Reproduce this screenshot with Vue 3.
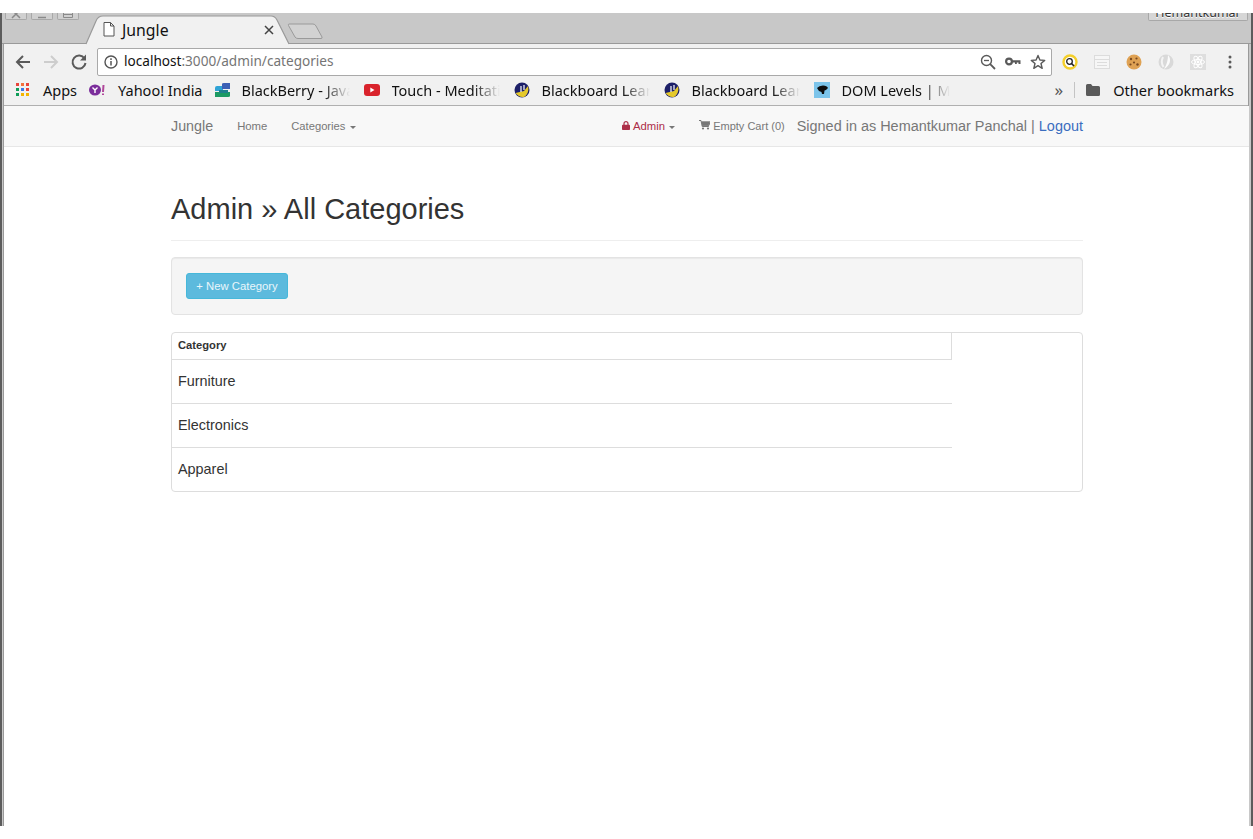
<template>
  <div class="window">
    <div class="tabstrip">
      <div class="wm-buttons">
        <span class="wm-btn">
          <svg width="20" height="7" viewBox="0 0 20 7"><path d="M6 -3 L14 5 M14 -3 L6 5" stroke="#8a8a8a" stroke-width="1.500" /></svg>
        </span>
        <span class="wm-btn">
          <svg width="20" height="7" viewBox="0 0 20 7"><path d="M6 4.500 H14" stroke="#8a8a8a" stroke-width="1.500" /></svg>
        </span>
        <span class="wm-btn">
          <svg width="20" height="7" viewBox="0 0 20 7"><path d="M5.500 -2 V4.500 H14.500 V-2 M5.500 1.500 H14.500" fill="none" stroke="#8a8a8a" /></svg>
        </span>
      </div>
      <div class="tab">
        <svg class="tab-shape" width="206" height="31" viewBox="0 0 206 31">
          <path d="M1 30 L11 7 Q13 2 18 2 L186 2 Q190 2 192 6 L204 30" fill="#f1f1f1" stroke="#9a9a9a" stroke-width="1.2" />
        </svg>
        <svg class="tab-file" width="12" height="15" viewBox="0 0 12 15">
          <path d="M1 .5 H7.5 L11 4 V14 H1 Z M7.5 .5 V4 H11" fill="#fff" stroke="#555" stroke-width="1" />
        </svg>
        <span class="tab-title">Jungle</span>
        <svg class="tab-close" width="10" height="10" viewBox="0 0 10 10">
          <path d="M1 1 L9 9 M9 1 L1 9" stroke="#444" stroke-width="1.5" />
        </svg>
      </div>
      <svg class="newtab" width="36" height="18" viewBox="0 0 36 18">
        <path d="M2 2 H26 Q28 2 29 4 L35 15 Q35.500 16.500 34 16.500 H11 Q9 16.500 8 15 L1.500 3.500 Q1 2 2 2 Z" fill="#d2d2d2" stroke="#9a9a9a" />
      </svg>
      <div class="profile"><span>Hemantkumar</span></div>
    </div>

    <div class="main">
      <div class="toolbar">
        <svg class="nav-icon" width="18" height="18" viewBox="0 0 18 18">
          <path d="M16 9 H3.500 M9 3 L3 9 L9 15" fill="none" stroke="#5a5a5a" stroke-width="2" />
        </svg>
        <svg class="nav-icon" width="18" height="18" viewBox="0 0 18 18">
          <path d="M2 9 H14.500 M9 3 L15 9 L9 15" fill="none" stroke="#cdcdcd" stroke-width="2" />
        </svg>
        <svg class="nav-icon" width="18" height="18" viewBox="0 0 18 18">
          <path d="M14.500 5.500 A6.500 6.500 0 1 0 15.500 10" fill="none" stroke="#5a5a5a" stroke-width="2" />
          <path d="M16 1.500 V7.500 H10 Z" fill="#5a5a5a" />
        </svg>
        <div class="omnibox">
          <svg class="info" width="14" height="14" viewBox="0 0 14 14">
            <circle cx="7" cy="7" r="6" fill="none" stroke="#555" stroke-width="1.400" />
            <path d="M7 6 V10.500 M7 3.200 V5" stroke="#555" stroke-width="1.500" />
          </svg>
          <span class="url"><span class="host">localhost</span>:3000/admin/categories</span>
          <div class="omni-actions">
            <svg width="16" height="16" viewBox="0 0 16 16">
              <circle cx="6.500" cy="6.500" r="5" fill="none" stroke="#5a5a5a" stroke-width="1.400" />
              <path d="M10.200 10.200 L15 15" stroke="#5a5a5a" stroke-width="1.800" />
              <path d="M4 6.500 H9" stroke="#5a5a5a" stroke-width="1.300" />
            </svg>
            <svg width="16" height="9" viewBox="0 0 16 9">
              <circle cx="4" cy="4.500" r="2.900" fill="none" stroke="#5a5a5a" stroke-width="2.200" />
              <path d="M7 3.200 H15.500 V7 H13.500 V5.600 H11.800 V7 H10 V5.600 H7 Z" fill="#5a5a5a" />
            </svg>
            <svg width="16" height="16" viewBox="0 0 16 16">
              <path d="M8 1.500 L9.900 6 L14.700 6.400 L11 9.500 L12.200 14.300 L8 11.700 L3.800 14.300 L5 9.500 L1.300 6.400 L6.100 6 Z" fill="none" stroke="#5a5a5a" stroke-width="1.400" stroke-linejoin="round" />
            </svg>
          </div>
        </div>
        <div class="extensions">
          <svg width="16" height="16" viewBox="0 0 16 16">
            <circle cx="8" cy="8" r="6.500" fill="#fff" stroke="#f4cf2b" stroke-width="2.400" />
            <circle cx="7.500" cy="7.500" r="2.800" fill="none" stroke="#222" stroke-width="1.300" />
            <path d="M9.500 9.500 L12 12" stroke="#222" stroke-width="1.600" />
          </svg>
          <svg width="16" height="14" viewBox="0 0 16 14">
            <rect x=".500" y=".500" width="15" height="13" fill="#f6f6f6" stroke="#dcdcdc" />
            <path d="M1 4.500 H15 M3 7.500 H13 M3 10.500 H13" stroke="#dcdcdc" />
          </svg>
          <svg width="16" height="16" viewBox="0 0 16 16">
            <circle cx="8" cy="8" r="7.500" fill="#dfa254" />
            <circle cx="5" cy="5" r="1.200" fill="#7a4a20" />
            <circle cx="10.500" cy="4.500" r="1.100" fill="#7a4a20" />
            <circle cx="8" cy="8.500" r="1.100" fill="#7a4a20" />
            <circle cx="4.500" cy="10.500" r="1.100" fill="#7a4a20" />
            <circle cx="11.500" cy="10.500" r="1.200" fill="#7a4a20" />
          </svg>
          <svg width="16" height="16" viewBox="0 0 16 16">
            <circle cx="8" cy="8" r="7.500" fill="#d9d9d9" />
            <path d="M10 1 C14 5 12 12 6 15 C9 10 10 6 10 1 Z" fill="#fbfbfb" />
            <path d="M5 3 C3 7 3.500 10 5.500 13" fill="none" stroke="#f4f4f4" stroke-width="2" />
          </svg>
          <svg width="16" height="16" viewBox="0 0 16 16">
            <rect width="16" height="16" fill="#dedede" />
            <ellipse cx="8" cy="8" rx="6.500" ry="2.500" fill="none" stroke="#fff" />
            <ellipse cx="8" cy="8" rx="6.500" ry="2.500" fill="none" stroke="#fff" transform="rotate(60 8 8)" />
            <ellipse cx="8" cy="8" rx="6.500" ry="2.500" fill="none" stroke="#fff" transform="rotate(120 8 8)" />
            <circle cx="8" cy="8" r="1.400" fill="#fff" />
          </svg>
          <svg class="menu-dots" width="4" height="14" viewBox="0 0 4 14">
            <circle cx="2" cy="2" r="1.500" fill="#5a5a5a" />
            <circle cx="2" cy="7" r="1.500" fill="#5a5a5a" />
            <circle cx="2" cy="12" r="1.500" fill="#5a5a5a" />
          </svg>
        </div>
      </div>

      <div class="bookmarks">
        <div class="bm apps">
          <svg width="14" height="14" viewBox="0 0 14 14">
            <rect v-for="d in appDots" :key="d.x + '-' + d.y" :x="d.x" :y="d.y" width="3" height="3" :fill="d.fill" />
          </svg>
          <span>Apps</span>
        </div>
        <div class="bm">
          <svg width="17" height="12" viewBox="0 0 17 12">
            <ellipse cx="6" cy="6" rx="6" ry="5.500" fill="#7b2d9b" />
            <path d="M3.500 3.500 L6 6 L8.500 3.500 M6 6 V9" fill="none" stroke="#fff" stroke-width="1.400" />
            <path d="M14.500 1 L14 8 M14 9.500 V11" stroke="#b0479a" stroke-width="2" />
          </svg>
          <span>Yahoo! India</span>
        </div>
        <div class="bm clipped first-clipped">
          <svg width="16" height="14" viewBox="0 0 16 14">
            <path d="M1 5 Q1 3 3 3 L9 3 L9 8 L1 8 Z" fill="#2fa3d6" />
            <path d="M8 1 Q8 0 10 0 H16 V6 H8 Z" fill="#3b5fb5" />
            <path d="M1 9 H16 V13 Q16 14 14 14 H1 Z" fill="#1c9a63" />
            <path d="M5 7 H14 V10 H5 Z" fill="#1f7f8e" />
          </svg>
          <span class="label">BlackBerry - Java</span>
        </div>
        <div class="bm clipped">
          <svg width="16" height="12" viewBox="0 0 16 12">
            <rect width="16" height="12" rx="3" fill="#d9232c" />
            <path d="M6.300 3.500 L10.500 6 L6.300 8.500 Z" fill="#fff" />
          </svg>
          <span class="label">Touch - Meditation</span>
        </div>
        <div v-for="n in 2" :key="n" class="bm clipped">
          <svg width="16" height="16" viewBox="0 0 16 16">
            <circle cx="8" cy="8" r="7.500" fill="#1d2068" />
            <path d="M1.500 11 L10 9 L14 4 Q15.500 10 11 14.500 Q6 16.500 1.500 11 Z" fill="#e5c92c" />
            <path d="M7 4 V10 M10 3 V8" stroke="#fff" stroke-width="1.200" />
          </svg>
          <span class="label">Blackboard Learn</span>
        </div>
        <div class="bm clipped">
          <svg width="16" height="16" viewBox="0 0 16 16">
            <rect width="16" height="16" fill="#7cc4ea" />
            <path d="M3 6 Q5 3.500 9 3.500 Q13 3.500 14 6 L12 8 L10.500 8.500 L10 12 L8 12 L7.500 10 Q4 9 3 6 Z" fill="#0c0c0c" />
          </svg>
          <span class="label">DOM Levels | MDN</span>
        </div>
        <div class="bm-end">
          <span class="chevrons">»</span>
          <span class="bm-sep"></span>
          <svg width="14" height="12" viewBox="0 0 14 12">
            <path d="M0 1.500 Q0 0 1.500 0 H5 L6.500 2 H12.500 Q14 2 14 3.500 V10.500 Q14 12 12.500 12 H1.500 Q0 12 0 10.500 Z" fill="#5a5a5a" />
          </svg>
          <span class="other">Other bookmarks</span>
        </div>
      </div>

      <div class="page">
        <nav class="navbar">
          <div class="container nav-row">
            <a class="brand">Jungle</a>
            <a class="nav-link home">Home</a>
            <a class="nav-link categories">Categories <i class="caret"></i></a>
            <div class="nav-right">
              <a class="nav-link admin">
                <svg width="8" height="9" viewBox="0 0 8 9">
                  <path d="M2 4 V2.700 A2 2 0 0 1 6 2.700 V4" fill="none" stroke="#ad2f48" stroke-width="1.200" />
                  <rect y="3.800" width="8" height="5.200" rx=".8" fill="#ad2f48" />
                </svg>
                Admin <i class="caret"></i>
              </a>
              <a class="nav-link cart">
                <svg width="11" height="10" viewBox="0 0 11 10">
                  <path d="M0 .5 H2 L3.200 6.500 H9.800 M2.400 1.800 H11 L10 5.400 H3" fill="none" stroke="#777" stroke-width="1" />
                  <path d="M2.600 2 H10.600 L9.700 5.200 H3.200 Z" fill="#777" />
                  <circle cx="4" cy="8.500" r="1.100" fill="#777" />
                  <circle cx="9" cy="8.500" r="1.100" fill="#777" />
                </svg>
                Empty Cart (0)
              </a>
              <span class="signed">Signed in as Hemantkumar Panchal | <a class="logout">Logout</a></span>
            </div>
          </div>
        </nav>

        <main class="container">
          <h1 class="page-header">Admin » All Categories</h1>
          <div class="well">
            <button class="btn-new">+ New Category</button>
          </div>
          <div class="panel">
            <table class="cat-table">
              <thead>
                <tr><th>Category</th></tr>
              </thead>
              <tbody>
                <tr v-for="c in categories" :key="c"><td>{{ c }}</td></tr>
              </tbody>
            </table>
          </div>
        </main>
      </div>
    </div>
  </div>
</template>

<script setup>
const categories = ['Furniture', 'Electronics', 'Apparel']

const dotColors = ['#e8453c', '#f4703c', '#e8453c', '#0f9d58', '#3b78e7', '#e8453c', '#0f9d58', '#f4b400', '#f4b400']
const appDots = dotColors.map((fill, i) => ({
  x: (i % 3) * 5,
  y: Math.floor(i / 3) * 5,
  fill,
}))
</script>

<style>
html,
body {
  margin: 0;
  background: #fff;
}
</style>

<style scoped>
.window {
  box-sizing: border-box;
  margin-top: 13px;
  height: 813px;
  display: flex;
  flex-direction: column;
  background: #c8c8c8;
  border-left: 2px solid #5c5c5c;
  border-right: 2px solid #5c5c5c;
  padding: 0 2px 0 1px;
  font-family: "Liberation Sans", Arial, sans-serif;
  overflow: hidden;
}

/* tab strip */
.tabstrip {
  position: relative;
  flex: 0 0 31px;
  box-sizing: border-box;
  height: 31px;
  display: flex;
  align-items: flex-end;
  padding-left: 83px;
  margin: 0 -2px 0 -1px;
  border-bottom: 1px solid #9a9a9a;
}

.wm-buttons {
  position: absolute;
  left: 3px;
  top: 0;
  display: flex;
  gap: 4px;
}

.wm-btn {
  display: block;
  width: 22px;
  height: 7px;
  border: 1px solid #a8a8a8;
  border-top: 0;
  border-radius: 0 0 2px 2px;
  background: #d0d0d0;
  box-sizing: border-box;
  overflow: hidden;
}

.wm-btn svg {
  display: block;
}

.tab {
  position: relative;
  width: 206px;
  height: 30px;
  display: flex;
  align-items: center;
  margin-bottom: -1px;
  box-sizing: border-box;
  padding: 1px 0 0 18px;
}

.tab-shape {
  position: absolute;
  left: 0;
  top: 0;
}

.tab-file,
.tab-title,
.tab-close {
  position: relative;
}

.tab-title {
  margin-left: 7px;
  font: 15.8px "Noto Sans", sans-serif;
  color: #111;
  width: 142px;
}

.newtab {
  margin: 0 0 3px -4px;
}

.profile {
  position: absolute;
  top: 0;
  right: 3px;
  width: 100px;
  height: 8px;
  box-sizing: border-box;
  border: 1px solid #a8a8a8;
  border-top: 0;
  border-radius: 0 0 2px 2px;
  background: #d6d6d6;
  overflow: hidden;
  text-align: center;
}

.profile span {
  display: block;
  margin-top: -7px;
  font: 12.5px/14px "Noto Sans", sans-serif;
  color: #333;
  text-shadow: 0 1px 0 #fff;
}

/* browser chrome */
.main {
  flex: 1;
  min-height: 0;
  display: flex;
  flex-direction: column;
  background: #fff;
  border-left: 1px solid #9a9a9a;
  border-right: 1px solid #9a9a9a;
}

.toolbar {
  flex: 0 0 32px;
  display: flex;
  align-items: center;
  background: #f1f1f1;
  padding: 3px 0 0 10px;
  box-sizing: border-box;
  gap: 10px;
}

.nav-icon {
  flex: none;
}

.omnibox {
  width: 955px;
  height: 28px;
  box-sizing: border-box;
  margin-left: -1px;
  background: #fff;
  border: 1px solid #a9a9a9;
  border-radius: 2px;
  display: flex;
  align-items: center;
  padding: 0 5px 0 6px;
}

.url {
  margin-top: -2px;
  margin-left: 6px;
  font: 13.6px "Noto Sans", sans-serif;
  color: #757575;
}

.host {
  color: #111;
}

.omni-actions {
  margin-left: auto;
  display: flex;
  align-items: center;
  gap: 9px;
}

.extensions {
  display: flex;
  align-items: center;
  gap: 16px;
}

.menu-dots {
  margin-left: 6px;
}

.bookmarks {
  flex: 0 0 30px;
  box-sizing: border-box;
  display: flex;
  align-items: center;
  background: #f1f1f1;
  border-bottom: 1px solid #b0b0b0;
  padding: 0 0 2px 12px;
  gap: 12px;
  font: 14.5px "Noto Sans", sans-serif;
  color: #111;
}

.bm {
  display: flex;
  align-items: center;
  gap: 12px;
  white-space: nowrap;
}

.bm svg {
  flex: none;
}

.apps {
  gap: 13px;
}

.clipped {
  flex: 0 0 138px;
}

.first-clipped {
  margin-left: -1px;
}

.label {
  width: 108px;
  overflow: hidden;
  -webkit-mask-image: linear-gradient(to right, #000 75%, transparent 100%);
  mask-image: linear-gradient(to right, #000 75%, transparent 100%);
}

.bm-end {
  margin-left: auto;
  display: flex;
  align-items: center;
  padding-right: 14px;
}

.chevrons {
  color: #555;
  margin-right: 11px;
  font-size: 17px;
  line-height: 17px;
}

.bm-sep {
  width: 1px;
  height: 16px;
  background: #c4c4c4;
  margin-right: 11px;
}

.other {
  margin-left: 13px;
  font-size: 14.6px;
}

/* page */
.page {
  flex: 1;
  min-height: 0;
  background: #fff;
  margin: 0 -1px 0 0;
  color: #333;
}

.container {
  width: 912px;
  margin-left: 167px;
}

.navbar {
  height: 41px;
  box-sizing: border-box;
  background: #f8f8f8;
  border-bottom: 1px solid #e7e7e7;
}

.nav-row {
  height: 40px;
  display: flex;
  align-items: center;
}

.brand {
  font-size: 14.3px;
  color: #777;
}

.nav-link {
  font-size: 11.3px;
  color: #777;
  white-space: nowrap;
}

.home {
  margin: 0 24px;
}

.categories {
  font-size: 11.2px;
}

.caret {
  display: inline-block;
  width: 0;
  height: 0;
  margin-left: 1px;
  vertical-align: middle;
  border-top: 3px solid #777;
  border-left: 3.500px solid transparent;
  border-right: 3.500px solid transparent;
}

.nav-right {
  margin-left: auto;
  display: flex;
  align-items: center;
}

.admin {
  color: #ad2f48;
  margin-right: 24px;
}

.cart {
  font-size: 11px;
  margin-right: 12px;
}

.signed {
  font-size: 14.45px;
  color: #777;
  white-space: nowrap;
}

.logout {
  color: #3b6dbf;
}

.page-header {
  margin: 46px 0 16px;
  padding-bottom: 14px;
  border-bottom: 1px solid #eee;
  font-size: 29px;
  line-height: 33px;
  font-weight: 400;
  color: #333;
}

.well {
  box-sizing: border-box;
  height: 58px;
  padding: 15px 14px;
  margin-bottom: 17px;
  background: #f5f5f5;
  border: 1px solid #e3e3e3;
  border-radius: 4px;
  box-shadow: inset 0 1px 1px rgba(0, 0, 0, .05);
}

.btn-new {
  display: block;
  width: 102px;
  height: 26px;
  padding: 0;
  font: 11.3px "Liberation Sans", Arial, sans-serif;
  color: #eaf6fb;
  background: #5cbadd;
  border: 1px solid #46b8da;
  border-radius: 3px;
}

.panel {
  box-sizing: border-box;
  height: 160px;
  border: 1px solid #ddd;
  border-radius: 4px;
}

.cat-table {
  width: 780px;
  border-collapse: collapse;
}

.cat-table th {
  height: 26px;
  padding: 0 6px 2px;
  box-sizing: border-box;
  text-align: left;
  font-size: 11.2px;
  color: #333;
  border-bottom: 1px solid #ddd;
  border-right: 1px solid #ddd;
}

.cat-table td {
  box-sizing: border-box;
  height: 44px;
  padding: 0 6px;
  font-size: 14.4px;
  color: #333;
  border-top: 1px solid #ddd;
}

.cat-table tbody tr:first-child td {
  padding-bottom: 1px;
  border-top: 0;
}
</style>
